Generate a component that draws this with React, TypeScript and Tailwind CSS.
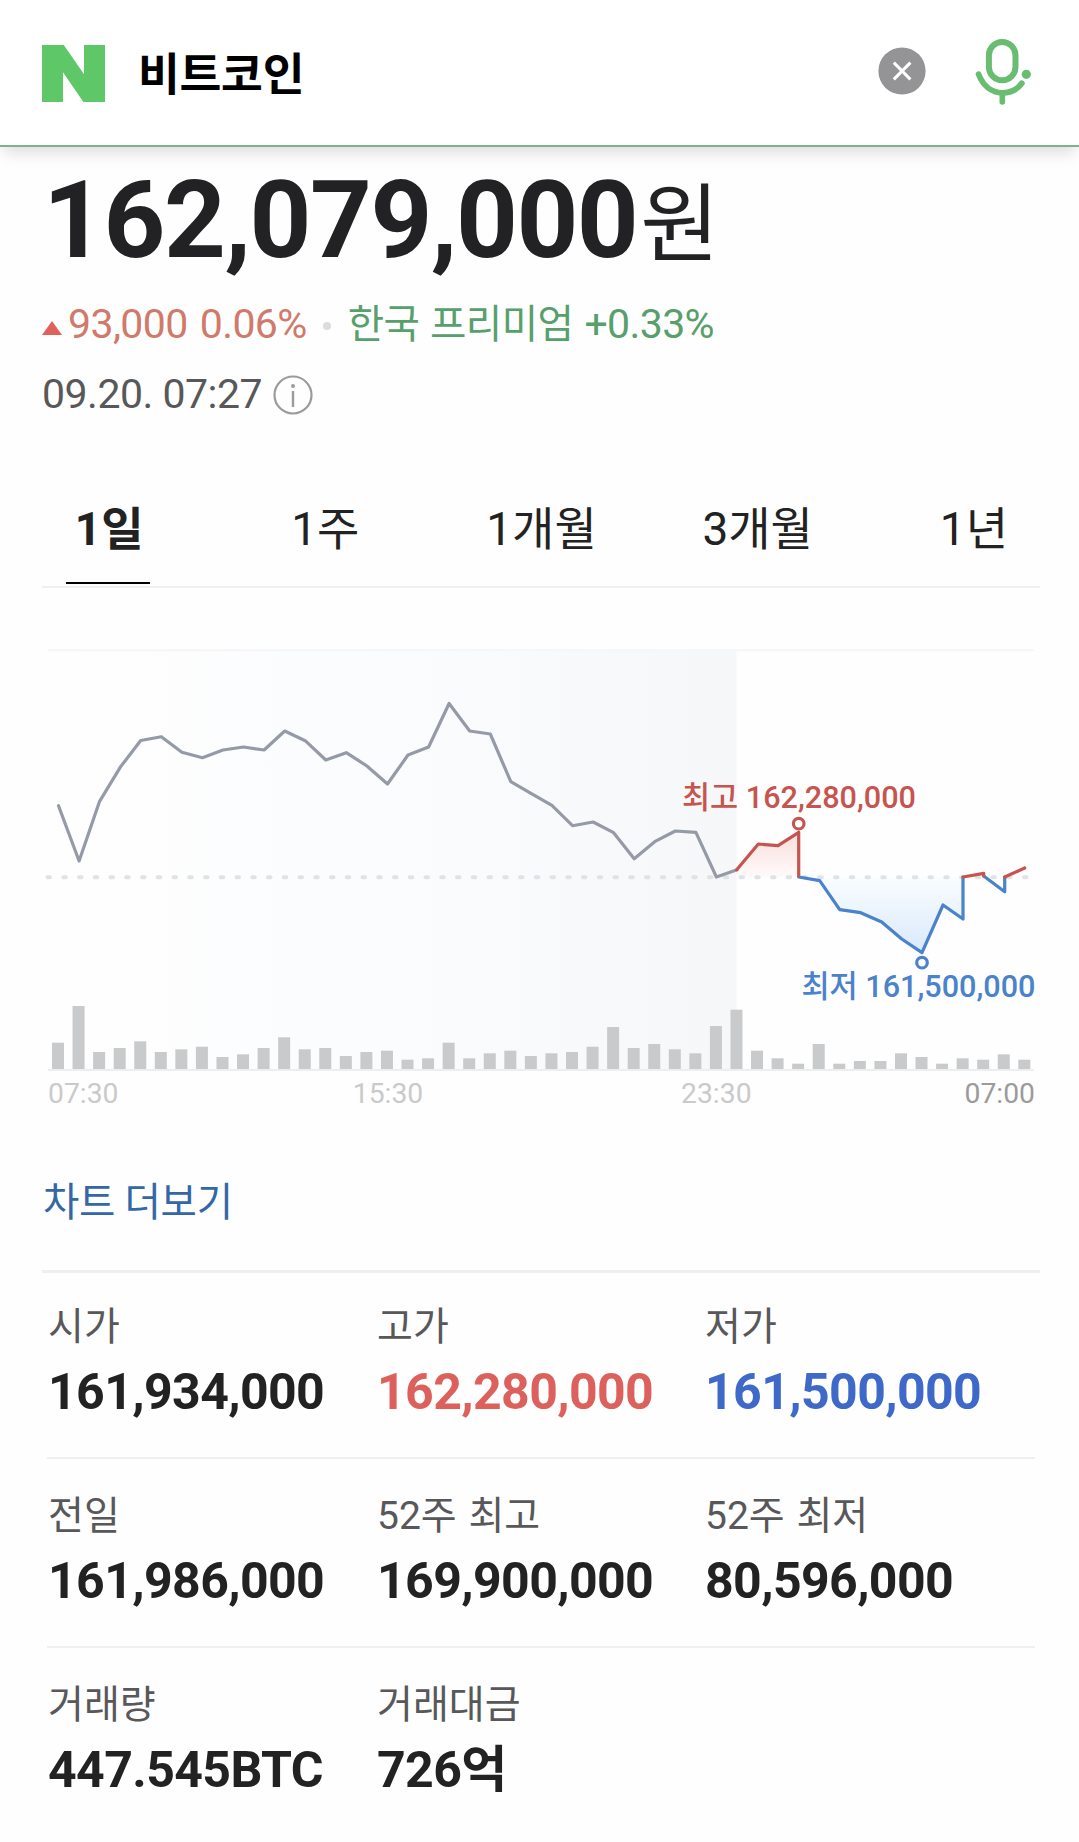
import React from "react";

const PITCH = 20.56;

const volumes = [
  26.3, 63, 17, 21, 27.7, 17, 19.7, 22.3, 12, 14.7, 21, 31.7, 19.7, 21, 13, 17, 18.3, 9.3, 10.7, 26.3, 10.7, 15.7,
  18.3, 13, 15.7, 17, 22.3, 42, 21, 25, 19.7, 15.7, 43, 59.3, 18.3, 10.7, 5.3, 25, 5.3, 8, 8, 15.7, 12, 5.3, 10.7,
  9.3, 14.7, 9.3,
];

const previousDay = [
  805.7, 861, 801.3, 767.3, 740.5, 736.7, 752.3, 757.7, 750, 747, 750, 731, 740.7, 760, 752.7, 766, 784, 755, 747,
  703.5, 731, 734, 781.7, 793.7, 805.3, 825.7, 822, 832.7, 858.7, 841.7, 831, 832.3, 877, 869.7,
];

const previousLine = previousDay.map((y, i) => `${(58.5 + i * PITCH).toFixed(1)},${y}`).join(" ");

const tabs = ["1일", "1주", "1개월", "3개월", "1년"];

type Stat = { label: string; value: string; tone?: "up" | "down" };

const rows: Stat[][] = [
  [
    { label: "시가", value: "161,934,000" },
    { label: "고가", value: "162,280,000", tone: "up" },
    { label: "저가", value: "161,500,000", tone: "down" },
  ],
  [
    { label: "전일", value: "161,986,000" },
    { label: "52주 최고", value: "169,900,000" },
    { label: "52주 최저", value: "80,596,000" },
  ],
  [
    { label: "거래량", value: "447.545BTC" },
    { label: "거래대금", value: "726억" },
  ],
];

function Logo() {
  return (
    <svg width="63" height="57" viewBox="42 45 63 57" className="block shrink-0">
      <path d="M42 45H63.8L84 74.3V45H105V102H83.4L63 72.3V102H42Z" fill="#5ec767" />
    </svg>
  );
}

function ClearIcon() {
  return (
    <svg width="48" height="48" viewBox="0 0 48 48" className="block">
      <circle cx="24" cy="24" r="23.6" fill="#949496" />
      <path d="M15.8 15.6L32.4 32.4M32.4 15.6L15.8 32.4" stroke="#fff" strokeWidth="3" />
    </svg>
  );
}

function MicIcon() {
  return (
    <svg width="58" height="68" viewBox="974 37 58 68" className="block" fill="none" stroke="#68bd70" strokeLinecap="round">
      <rect x="988.9" y="41.9" width="26.6" height="38.3" rx="13.3" strokeWidth="6" />
      <path d="M978.6 74.3C983 85.5 991.5 92.8 1002.3 92.8C1010.3 92.8 1017.5 89.3 1021.8 83.3" strokeWidth="5.8" />
      <path d="M1002.3 94V102" strokeWidth="5.6" />
      <circle cx="1026.3" cy="74.3" r="4.6" fill="#68bd70" stroke="none" />
    </svg>
  );
}

function Header() {
  return (
    <header className="flex h-[147px] items-start border-b-2 border-[#7fb286] bg-white pl-[42px] shadow-[0_10px_14px_-4px_rgba(0,0,0,0.13)]">
      <div className="mt-[45px]">
        <Logo />
      </div>
      <div className="mt-[46px] ml-[33px] h-[60px] grow text-[45.5px] leading-[60px] font-bold tracking-[-0.3px] text-black">
        비트코인
      </div>
      <button className="mt-[46.5px]" aria-label="지우기">
        <ClearIcon />
      </button>
      <button className="mt-[37px] mr-[47px] ml-[48px]" aria-label="음성검색">
        <MicIcon />
      </button>
    </header>
  );
}

function Quote() {
  return (
    <section className="pt-[19px] pl-[42px]">
      <div className="flex h-[108px] items-baseline leading-[108px] text-[#222224]">
        <span className="ml-[1px] text-[108px] font-bold tracking-[-1.5px]">162,079,000</span>
        <span className="relative -top-[2px] ml-[3px] text-[86px]">원</span>
      </div>
      <div className="mt-5 flex h-[60px] items-center text-[41px] leading-[60px] tracking-[-0.6px]">
        <svg width="20" height="14" viewBox="0 0 20 14" className="mt-[8px] block">
          <path d="M10 0L20 14H0Z" fill="#e0605a" />
        </svg>
        <span className="ml-1.5 text-[#d07a6b] [word-spacing:2.5px]">93,000 0.06%</span>
        <span className="mx-4 mt-1 size-2 rounded-full bg-[#dcdcdc]" />
        <span className="ml-px text-[#57a06c] [word-spacing:1.5px]">
          <span className="text-[39.6px]">한국 프리미엄</span> +0.33%
        </span>
      </div>
      <div className="mt-2.5 flex h-[60px] items-center text-[41px] leading-[60px] tracking-[-0.5px] text-[#58585a]">
        <span>09.20. 07:27</span>
        <svg width="40" height="40" viewBox="0 0 40 40" className="ml-[11px] mt-[2px] block">
          <circle cx="20" cy="20" r="18.5" fill="none" stroke="#9b9b9b" strokeWidth="2.2" />
          <circle cx="20" cy="11" r="2" fill="#9b9b9b" />
          <path d="M20 16V32" stroke="#9b9b9b" strokeWidth="2.4" />
        </svg>
      </div>
    </section>
  );
}

function Tabs() {
  return (
    <nav className="mr-[39px] ml-[42px] mt-[50px] h-[114px] border-b-2 border-[#f0f0f0]">
      <div className="-mr-[42px] -ml-[41px] grid grid-cols-5 text-center text-[46px] leading-[111px] text-[#222]">
        {tabs.map((tab, i) => (
          <div key={tab} className={i === 0 ? "relative h-[112px] font-bold" : "h-[112px]"}>
            {tab}
            {i === 0 && <div className="absolute bottom-0.5 left-[65px] h-0.5 w-[84px] bg-black" />}
          </div>
        ))}
      </div>
    </nav>
  );
}

function Chart() {
  return (
    <svg width="1079" height="532" viewBox="0 588 1079 532" className="block">
      <defs>
        <linearGradient id="past" x1="0" x2="1" y1="0" y2="0">
          <stop offset="0" stopColor="#fefefe" />
          <stop offset="0.5" stopColor="#fbfcfe" />
          <stop offset="1" stopColor="#f6f7f9" />
        </linearGradient>
        <linearGradient id="rise" x1="0" x2="0" y1="0" y2="1">
          <stop offset="0" stopColor="#f9dedc" />
          <stop offset="1" stopColor="#fffafa" />
        </linearGradient>
        <linearGradient id="fall" x1="0" x2="0" y1="0" y2="1">
          <stop offset="0" stopColor="#fafdff" />
          <stop offset="1" stopColor="#d9e9fb" />
        </linearGradient>
      </defs>
      <rect x="48" y="651" width="688.5" height="418" fill="url(#past)" />
      <rect x="48" y="649" width="986" height="2.5" fill="#f6f7f8" />
      <polygon points="736.7,869.7 758.3,844 778,845.7 798.7,832.3 798.7,877 736.7,877" fill="url(#rise)" />
      <polygon
        points="798.7,877 819.7,880.7 839.7,909.7 860.7,912.7 881.7,922 901.7,939 922,952.7 943,905 963,919 963,877"
        fill="url(#fall)"
      />
      <path d="M47.5 877.3H1029" stroke="#dfe3e6" strokeWidth="4" strokeLinecap="round" strokeDasharray="2.5 13.25" fill="none" />
      <g fill="#c9cacb">
        {volumes.map((h, i) => (
          <rect key={i} x={52 + i * PITCH} y={1069 - h} width="12" height={h} />
        ))}
      </g>
      <rect x="48" y="1069" width="986" height="2" fill="#eceeef" />
      <g fill="none" strokeWidth="3.2" strokeLinejoin="round" strokeLinecap="round">
        <polyline points={previousLine} stroke="#949ba7" />
        <g stroke="#4a82cb">
          <polyline points="798.7,877 819.7,880.7 839.7,909.7 860.7,912.7 881.7,922 901.7,939 922,952.7 943,905 963,919 963,877" />
          <polyline points="983.7,876 1004.7,891.7 1004.7,877" />
          <circle cx="922" cy="962.7" r="5.3" fill="#fff" />
        </g>
        <g stroke="#c6544f">
          <polyline points="736.7,869.7 758.3,844 778,845.7 798.7,832.3 798.7,876" />
          <polyline points="963,877 983.7,873.3 983.7,876" />
          <polyline points="1004.7,877 1024.7,868" />
          <circle cx="798.7" cy="823.7" r="5.3" fill="#fff" />
        </g>
      </g>
      <g fontSize="30.6" fontWeight="500">
        <text x="916" y="807.5" textAnchor="end" fill="#c6544f">최고 162,280,000</text>
        <text x="1035.5" y="996.5" textAnchor="end" fill="#4a82cb">최저 161,500,000</text>
      </g>
      <g fontSize="28.3" fill="#cacaca">
        <text x="48" y="1102.5">07:30</text>
        <text x="388" y="1102.5" textAnchor="middle">15:30</text>
        <text x="716.3" y="1102.5" textAnchor="middle">23:30</text>
        <text x="1035" y="1102.5" textAnchor="end" fill="#9b9b9b">07:00</text>
      </g>
    </svg>
  );
}

function Stats() {
  return (
    <section className="mr-[44px] ml-[47px]">
      {rows.map((row, r) => (
        <div
          key={r}
          className={`grid grid-cols-[329px_328px_1fr] pb-[35px] ${r === 0 ? "pt-[34px]" : "border-t-2 border-[#f0f0f0] pt-[37px]"}`}
        >
          {row.map((s) => (
            <div key={s.label} className="pl-px">
              <div className="h-10 text-[39px] leading-10 text-[#58585a] [word-spacing:2px]">{s.label}</div>
              <div
                className={`mt-[15px] h-[60px] text-[50px] leading-[60px] font-bold tracking-[-0.6px] ${
                  s.tone === "up" ? "text-[#dc615c]" : s.tone === "down" ? "text-[#3e69c8]" : "text-[#222]"
                }`}
              >
                {s.value}
              </div>
            </div>
          ))}
        </div>
      ))}
    </section>
  );
}

export default function App() {
  return (
    <main className="h-[1842px] w-[1079px] overflow-hidden bg-[#fefefe] font-[Roboto,'Noto_Sans_CJK_KR',sans-serif]">
      <Header />
      <Quote />
      <Tabs />
      <Chart />
      <div className="mt-[53px] ml-[43px] h-[58px] text-[39.5px] leading-[60px] tracking-[-0.3px] text-[#3467a5]">
        차트 더보기
      </div>
      <div className="mt-[39px] mr-[39px] ml-[42px] h-[3px] bg-[#efefef]" />
      <Stats />
    </main>
  );
}
